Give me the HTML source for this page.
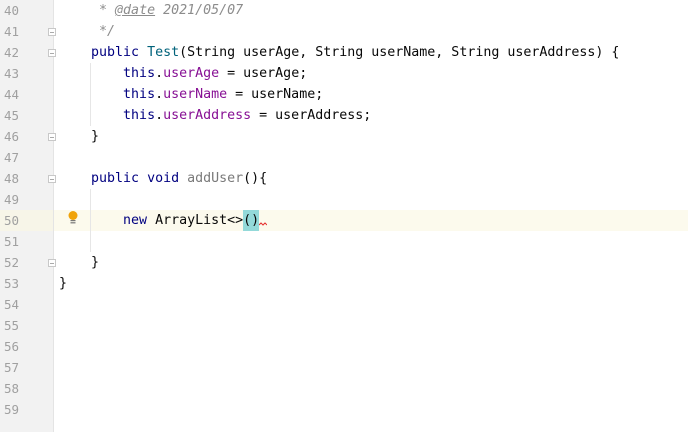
<!DOCTYPE html>
<html><head><style>
body{margin:0;width:688px;height:432px;overflow:hidden;background:#fff;position:relative;font-family:"DejaVu Sans Mono",monospace;font-size:13.3px}
.g{position:absolute;left:0;top:0;width:53px;height:432px;background:#f2f2f2;border-right:1px solid #e4e4e4}
.ln{position:absolute;left:4px;color:#a0a0a0;height:21px;line-height:21px;font-size:12.5px}
.c{position:absolute;left:59px;height:21px;line-height:21px;white-space:pre;color:#080808}
.k{color:#000080}.f{color:#871094}.m{color:#00627a}.cm{color:#8c8c8c;font-style:italic}
.fold{position:absolute;left:48px;width:8px;height:8px;border:1px solid #c8c8c8;background:#fff;box-sizing:border-box}
.fold:after{content:"";position:absolute;left:1px;top:3px;width:4px;height:1px;background:#aaa}
.guide{position:absolute;left:90px;width:1px;background:#e6e6e6}
</style></head><body>
<div style="position:absolute;left:0;top:210px;width:688px;height:21px;background:#fcfaed"></div>
<div class="g" style="height:210px"></div>
<div class="g" style="top:231px;height:201px"></div>
<div style="position:absolute;left:0;top:210px;width:53px;height:21px;background:#f7f5e8;border-right:1px solid #e4e4e4"></div>
<div class="ln" style="top:0">40</div><div class="ln" style="top:21px">41</div><div class="ln" style="top:42px">42</div><div class="ln" style="top:63px">43</div><div class="ln" style="top:84px">44</div><div class="ln" style="top:105px">45</div><div class="ln" style="top:126px">46</div><div class="ln" style="top:147px">47</div><div class="ln" style="top:168px">48</div><div class="ln" style="top:189px">49</div><div class="ln" style="top:210px">50</div><div class="ln" style="top:231px">51</div><div class="ln" style="top:252px">52</div><div class="ln" style="top:273px">53</div><div class="ln" style="top:294px">54</div><div class="ln" style="top:315px">55</div><div class="ln" style="top:336px">56</div><div class="ln" style="top:357px">57</div><div class="ln" style="top:378px">58</div><div class="ln" style="top:399px">59</div>
<div class="fold" style="top:28px"></div><div class="fold" style="top:49px"></div><div class="fold" style="top:133px"></div><div class="fold" style="top:175px"></div><div class="fold" style="top:259px"></div>
<div class="guide" style="top:63px;height:63px"></div>
<div class="guide" style="top:189px;height:63px"></div>
<div style="position:absolute;left:243px;top:210px;width:16px;height:21px;background:#93d9d9"></div>
<svg style="position:absolute;left:66px;top:210px" width="14" height="16"><circle cx="7" cy="5.5" r="4.5" fill="#f0a30a"/><rect x="4.5" y="10" width="5" height="1.2" fill="#777"/><rect x="4.5" y="12.2" width="5" height="1.2" fill="#777"/></svg>
<div class="c" style="top:0"><span class="cm">     * <u>@date</u> 2021/05/07</span></div>
<div class="c" style="top:21px"><span class="cm">     */</span></div>
<div class="c" style="top:42px">    <span class="k">public</span> <span class="m">Test</span>(String userAge, String userName, String userAddress) {</div>
<div class="c" style="top:63px">        <span class="k">this</span>.<span class="f">userAge</span> = userAge;</div>
<div class="c" style="top:84px">        <span class="k">this</span>.<span class="f">userName</span> = userName;</div>
<div class="c" style="top:105px">        <span class="k">this</span>.<span class="f">userAddress</span> = userAddress;</div>
<div class="c" style="top:126px">    }</div>
<div class="c" style="top:168px">    <span class="k">public void</span> <span style="color:#7a7a7a">addUser</span>(){</div>
<div class="c" style="top:210px">        <span class="k">new</span> ArrayList&lt;&gt;()</div>
<svg style="position:absolute;left:259px;top:222px" width="8" height="5"><path d="M0 3 L2 1 L4 3 L6 1 L8 3" stroke="#e53030" fill="none" stroke-width="1"/></svg>
<div class="c" style="top:252px">    }</div>
<div class="c" style="top:273px">}</div>
</body></html>
